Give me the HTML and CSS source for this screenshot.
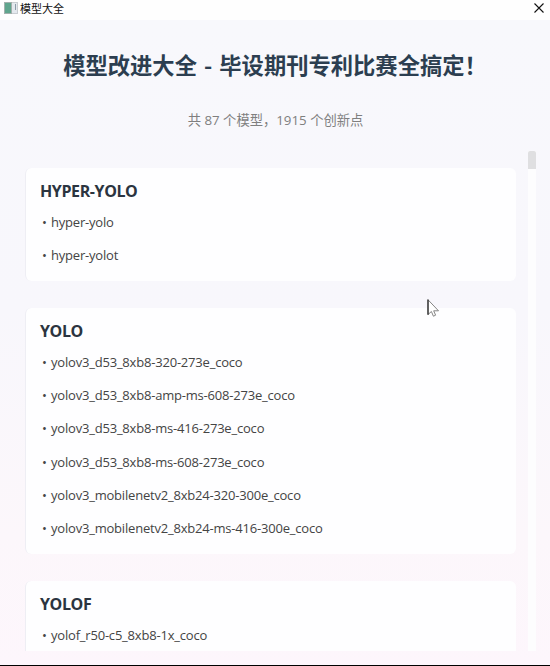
FILE: index.html
```html
<!DOCTYPE html>
<html lang="zh-CN">
<head>
    <meta charset="UTF-8">
    <meta name="viewport" content="width=device-width, initial-scale=1.0">
    <title>模型大全</title>
    <link rel="stylesheet" href="styles.css">
</head>
<body>

<div class="window">
    <div class="titlebar">
        <svg class="app-icon" width="14" height="12" viewBox="0 0 14 12">
            <rect x="0.5" y="0.5" width="13" height="11" fill="#e4e9ee" stroke="#c9ced2"/>
            <rect x="0" y="0" width="8" height="12" fill="#a3b0ac"/>
            <rect x="1" y="1" width="6" height="10" fill="#5fa58d"/>
            <rect x="11" y="2" width="1" height="6" fill="#8b9ba8"/>
        </svg>
        <span class="caption">模型大全</span>
        <svg class="close" width="10" height="10" viewBox="0 0 10 10">
            <path d="M0.5 0.5L9.5 9.5M9.5 0.5L0.5 9.5" stroke="#111" stroke-width="1.1" fill="none"/>
        </svg>
    </div>

    <div class="content">
        <h1>模型改进大全 - 毕设期刊专利比赛全搞定！</h1>
        <p class="summary">共 87 个模型，1915 个创新点</p>

        <div class="scroll-area">
            <div class="cards">
                <div class="card">
                    <h2>HYPER-YOLO</h2>
                    <ul>
                        <li><span>hyper-yolo</span></li>
                        <li><span>hyper-yolot</span></li>
                    </ul>
                </div>
                <div class="card">
                    <h2>YOLO</h2>
                    <ul>
                        <li><span>yolov3_d53_8xb8-320-273e_coco</span></li>
                        <li><span>yolov3_d53_8xb8-amp-ms-608-273e_coco</span></li>
                        <li><span>yolov3_d53_8xb8-ms-416-273e_coco</span></li>
                        <li><span>yolov3_d53_8xb8-ms-608-273e_coco</span></li>
                        <li><span>yolov3_mobilenetv2_8xb24-320-300e_coco</span></li>
                        <li><span>yolov3_mobilenetv2_8xb24-ms-416-300e_coco</span></li>
                    </ul>
                </div>
                <div class="card">
                    <h2>YOLOF</h2>
                    <ul>
                        <li><span>yolof_r50-c5_8xb8-1x_coco</span></li>
                    </ul>
                </div>
            </div>
            <div class="scrollbar"><div class="thumb"></div></div>
        </div>
    </div>

    <!-- mouse pointer -->
    <svg class="cursor" width="13" height="19" viewBox="0 0 13 19">
        <path d="M1 0.8V15.5L4.4 12.5L6.4 17.2L8.6 16.2L6.7 11.8H11.5Z" fill="#fff" stroke="#777" stroke-width="0.9"/>
        <path d="M1 0.5V15.8" stroke="#222" stroke-width="1.2"/>
    </svg>
</div>

</body>
</html>
```

FILE: styles.css
```css
* {
    box-sizing: border-box;
}

body {
    margin: 0;
    font-family: "Open Sans", "Noto Sans CJK SC", sans-serif;
    overflow: hidden;
}

.window {
    position: relative;
    display: flex;
    flex-direction: column;
    height: 666px;
    border-bottom: 1px solid #000;
}

.titlebar {
    display: flex;
    align-items: center;
    height: 20px;
    padding: 0 6px 4px 4px;
    background-color: #fefefe;
}

.caption {
    margin-left: 2px;
    font-family: "Noto Sans CJK SC", sans-serif;
    font-size: 11px;
    line-height: 16px;
    color: #111;
}

.close {
    margin-left: auto;
}

.content {
    flex: 1;
    display: flex;
    flex-direction: column;
    min-height: 0;
    padding: 24px 14px 14px 25px;
    background: linear-gradient(#f8f8fc 0%, #f8f7fc 45%, #fcf7fb 80%, #fdf6fc 100%);
}

h1 {
    margin: 0;
    padding-right: 11px;
    font-family: "Noto Sans CJK SC", sans-serif;
    font-size: 22.3px;
    line-height: 40px;
    font-weight: 700;
    text-align: center;
    white-space: nowrap;
    word-spacing: 2px;
    color: #2c3e50;
}

.summary {
    margin: 26px 10px 0 0;
    font-size: 13.3px;
    line-height: 20px;
    text-align: center;
    color: #7f7f7f;
}

.scroll-area {
    flex: 1;
    display: flex;
    min-height: 0;
    margin-top: 21px;
    overflow: hidden;
}

.cards {
    flex: 1;
    display: flex;
    flex-direction: column;
    gap: 27px;
    padding-top: 17px;
}

.card {
    flex: none;
    padding: 7px 14px;
    border-left: 1px solid #eeeef4;
    border-radius: 6px;
    background-color: #fefeff;
}

h2 {
    margin: 0;
    font-size: 16px;
    line-height: 32px;
    font-weight: 700;
    letter-spacing: -0.4px;
    color: #2b3440;
}

ul {
    margin: 0;
    padding: 0;
    list-style: none;
}

li {
    display: flex;
    height: 33.35px;
    padding-left: 2px;
    font-size: 13px;
    line-height: 31px;
    letter-spacing: -0.2px;
    color: #444;
}

li::before {
    content: "•";
    width: 9px;
}

.scrollbar {
    width: 8px;
    margin-left: 12px;
    background-color: #fdfdfe;
}

.thumb {
    height: 18px;
    border-radius: 2px 2px 0 0;
    background-color: #dfdfe1;
}

.cursor {
    position: absolute;
    left: 427px;
    top: 299px;
}
```
